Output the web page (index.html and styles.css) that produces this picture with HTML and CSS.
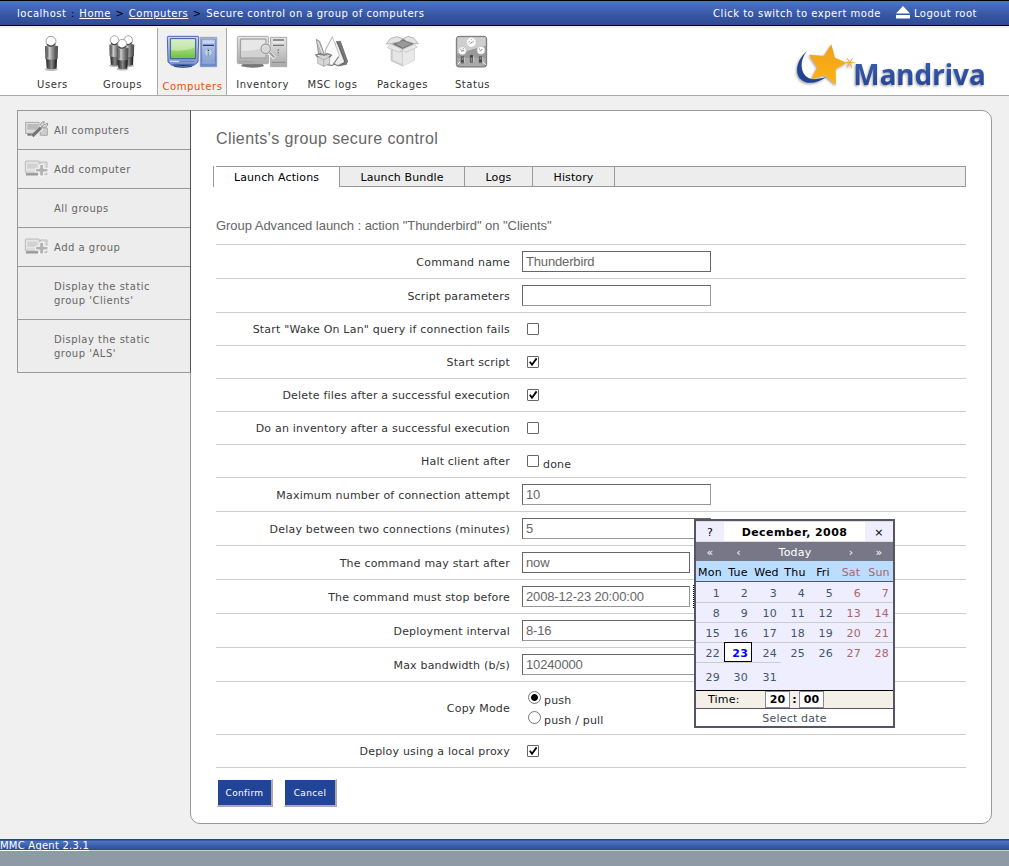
FILE: index.html
```html
<!DOCTYPE html>
<html lang="en">
<head>
<meta charset="utf-8">
<title>Mandriva Management Console</title>
<link rel="stylesheet" href="styles.css">
</head>
<body>
<svg class="defs" width="0" height="0" aria-hidden="true">
<defs>
<linearGradient id="metal"><stop offset="0" stop-color="#444"/><stop offset=".35" stop-color="#ccc"/><stop offset=".6" stop-color="#888"/><stop offset="1" stop-color="#444"/></linearGradient>
<linearGradient id="legs"><stop offset="0" stop-color="#222"/><stop offset=".5" stop-color="#888"/><stop offset="1" stop-color="#111"/></linearGradient>
<linearGradient id="green" x2="0" y2="1"><stop offset="0" stop-color="#cbeab4"/><stop offset=".55" stop-color="#9ad573"/><stop offset="1" stop-color="#6fc13e"/></linearGradient>
<linearGradient id="blue" x2="0" y2="1"><stop offset="0" stop-color="#c5d2f0"/><stop offset="1" stop-color="#7f97d0"/></linearGradient>
<linearGradient id="grey" x2="0" y2="1"><stop offset="0" stop-color="#e6e6e6"/><stop offset="1" stop-color="#aaa"/></linearGradient>
<linearGradient id="brand" x2="0" y2="1"><stop offset="0" stop-color="#3c63b4"/><stop offset="1" stop-color="#203f8f"/></linearGradient>
<linearGradient id="gold" x2="0" y2="1"><stop offset="0" stop-color="#f0a01c"/><stop offset="1" stop-color="#fcb415"/></linearGradient>
<filter id="soft" x="-20%" y="-20%" width="140%" height="140%"><feDropShadow dx="-3" dy="4" stdDeviation="3" flood-color="#555" flood-opacity=".55"/></filter>
<g id="person">
<ellipse cx="154" cy="208" rx="20" ry="5" fill="#bbb"/>
<path d="M138 174h33l-1 31q-15 6-30 0z" fill="url(#legs)"/>
<path d="M135 139q19-8 39 0l-1 38q-19 5-37 0z" fill="url(#metal)"/>
<path d="M143 142v31M166 142v31" stroke="#555" stroke-width="2"/>
<circle cx="153" cy="124" r="15" fill="#fff" stroke="#888" stroke-width="2.5"/>
<path d="M141 133q12 12 25-2" fill="none" stroke="#444" stroke-width="4"/>
</g>
<g id="addpc">
<rect x="76" y="184" width="42" height="36" rx="2" fill="#ddd" stroke="#bbb" stroke-width="3"/><path d="M80 190h34v19H80z" fill="#d2d2d2" stroke="#f5f5f5" stroke-width="2"/><path d="M78 224h36" stroke="#999" stroke-width="7"/>
<path d="M121 187h20v37h-20z" fill="#ddd" stroke="#bbb" stroke-width="3"/>
<path d="M119 194h12v12h13v11h-13v12h-12v-12h-13v-11h13z" fill="#b3b3b3" stroke="#fafafa" stroke-width="3"/>
</g>
</defs>
</svg>

<header class="topbar">
<div class="crumbs">localhost <i>:</i> <a>Home</a> <i>&gt;</i> <a>Computers</a> <i>&gt;</i> Secure control on a group of computers</div>
<div class="session"><span class="expert">Click to switch to expert mode</span>
<svg width="14" height="13" viewBox="0 0 14 13"><path d="M7 0l7 7.5H0zM0 9h14v3.5H0z" fill="#fff"/></svg>
<span class="logout">Logout root</span></div>
</header>

<nav class="nav">
<a class="item"><svg viewBox="51 102 210 114"><use href="#person"/></svg><span>Users</span></a>
<a class="item"><svg viewBox="261 102 210 114"><g transform="translate(212 8) scale(.86 .91)"><use href="#person"/></g><g transform="translate(253 8) scale(.86 .91)"><use href="#person"/></g><g transform="translate(229 20) scale(.9)"><use href="#person"/></g></svg><span>Groups</span></a>
<a class="item active"><svg viewBox="474 102 204 114">
<path d="M518 196l5-8h50l7 8-6 5q-25 4-50 0z" fill="#1f3a6e"/><path d="M514 196q34 8 69 0" fill="none" stroke="#4d76b8" stroke-width="3"/>
<path d="M504 109h90q2 0 2 3l-2 74-8 7h-74l-8-7-2-74q0-3 2-3z" fill="url(#blue)" stroke="#5069ad" stroke-width="3"/>
<path d="M511 116h76v60h-76z" fill="url(#green)" stroke="#3c5aa2" stroke-width="3"/><path d="M514 118h70v24q-26 13-70 9z" fill="#e0f2d2" opacity=".55"/>
<path d="M510 184h27" stroke="#e6ecfa" stroke-width="3"/><path d="M540 184h43" stroke="#6480c0" stroke-width="3"/>
<path d="M601 112h49v88h-49z" fill="url(#blue)" stroke="#6a80bc" stroke-width="2"/><path d="M605 117h41v78h-41z" fill="none" stroke="#4b65a8" stroke-width="2"/><path d="M609 126h33" stroke="#d5dff5" stroke-width="4"/><path d="M609 136h33" stroke="#243d7a" stroke-width="4"/><circle cx="625" cy="157" r="12" fill="#c0cdec" stroke="#8298cf" stroke-width="2"/><path d="M623 151h4" stroke="#222" stroke-width="4"/><path d="M625 156v12" stroke="#54c54a" stroke-width="4"/><path d="M604 188h43" stroke="#90a2cf" stroke-width="4"/>
</svg><span>Computers</span></a>
<a class="item"><svg viewBox="-9 102 210 114">
<path d="M38 191h60l4 8q-34 8-69 0z" fill="#777"/><rect x="22" y="109" width="94" height="82" rx="4" fill="url(#grey)" stroke="#aaa" stroke-width="3"/><path d="M31 117h77v57H31z" fill="#d2d2d2" stroke="#999" stroke-width="3"/><path d="M34 120h71v20q-30 15-71 12z" fill="#e7e7e7"/><path d="M28 185h43" stroke="#999" stroke-width="3" stroke-dasharray="4 2"/>
<path d="M122 112h48v88h-48z" fill="url(#grey)" stroke="#aaa" stroke-width="3"/><path d="M129 120h33M129 136h33" stroke="#777" stroke-width="4"/><path d="M129 127h33" stroke="#eee" stroke-width="4"/><path d="M145 148v18" stroke="#777" stroke-width="4" stroke-dasharray="4 4"/><path d="M126 187h41" stroke="#888" stroke-width="3"/>
<path d="M117 158l17 16" stroke="#eee" stroke-width="12"/><path d="M119 158l14 14" stroke="#999" stroke-width="6"/><circle cx="107" cy="146" r="14" fill="#d8d8d8" stroke="#f0f0f0" stroke-width="7"/><circle cx="107" cy="146" r="14" fill="none" stroke="#999" stroke-width="4"/>
</svg><span>Inventory</span></a>
<a class="item"><svg viewBox="201 102 210 114">
<path d="M320 124l12-2 22 62-4 10-23 5-15-9z" fill="#777"/><path d="M320 124l25 62-19 12-25-9z" fill="#bbb" stroke="#444" stroke-width="2"/><path d="M318 124l24 62-20 8-8-5z" fill="#eee"/>
<path d="M307 110l21 56-22 30-18-5-2-40z" fill="#fafafa" stroke="#aaa" stroke-width="2"/><path d="M307 112l-21 38 5 37" fill="none" stroke="#bbb" stroke-width="3"/><path d="M291 194l17 3 18-27" fill="none" stroke="#777" stroke-width="3"/>
<path d="M259 118l10 6 15 41-18-2z" fill="#bbb" stroke="#777" stroke-width="2"/><path d="M263 124l16 40" stroke="#eee" stroke-width="3"/>
<path d="M263 171l19-9 17 8v21l-18 8-18-9z" fill="#d8d8d8" stroke="#999" stroke-width="2"/><path d="M263 171l18 8 18-8M281 179v20" fill="none" stroke="#999" stroke-width="2"/><path d="M263 171l-5-6 15-4 9 5 10-5 12 5-6 6" fill="none" stroke="#777" stroke-width="4"/>
</svg><span>MSC logs</span></a>
<a class="item"><svg viewBox="411 102 210 114">
<path d="M483 137l35-19 35 16v47l-35 17-35-16z" fill="#ddd" stroke="#bbb" stroke-width="2"/><path d="M518 151l35-15v45l-35 17z" fill="#e9e9e9"/><path d="M483 138l35 15v45l-35-16z" fill="#c9c9c9"/><path d="M488 146l28 12v34l-28-12z" fill="#e5e5e5"/><path d="M486 132l33-15 33 14-34 17z" fill="#777"/><path d="M498 132l21-10 24 10-25 11z" fill="#999"/>
<path d="M484 131l-15 1 12-16 19-6 18 6-9 9zM554 131l11 0-14-17-17-5-14 7 10 8z" fill="#e4e4e4" stroke="#999" stroke-width="2"/><path d="M483 133l34 15-9 9-36-14zM553 133l-35 15 9 9 35-16z" fill="#e8e8e8" stroke="#bbb" stroke-width="2"/>
</svg><span>Packages</span></a>
<a class="item"><svg viewBox="621 102 210 114">
<rect x="679" y="109" width="91" height="92" rx="8" fill="#999" stroke="#777" stroke-width="3"/><path d="M682 112h85v25q-30 8-85 24z" fill="#cfcfcf"/><path d="M682 174h85v15l-8 9h-69l-8-7z" fill="#aaa"/><g fill="#fff" stroke="#bbb" stroke-width="2"><circle cx="724" cy="127" r="15"/><circle cx="697" cy="152" r="12"/><circle cx="753" cy="151" r="12"/></g><path d="M716 125h3M723 119h2M730 124h2M721 130l7-4M691 148h3M698 146h3M693 153l10-1M747 147h3M757 147l-7 7" stroke="#777" stroke-width="3"/>
<g fill="#888" stroke="#444" stroke-width="2"><path d="M694 170h7v19h-7zM721 166h7v21h-7zM748 170h7v18h-7z"/></g><path d="M694 183h7M721 169h7M748 182h7" stroke="#333" stroke-width="5"/><path d="M703 171v17M731 167v20M758 171v17" stroke="#ddd" stroke-width="2"/><path d="M683 193l7-7M767 194l-8-7" stroke="#fff" stroke-width="3"/>
</svg><span>Status</span></a>
<svg class="logo" viewBox="279 120 582 150" width="194" height="50">
<g filter="url(#soft)"><path d="M321 153C285 184 283 227 308 242C328 254 354 249 379 231C348 240 328 241 315 226C301 209 300 178 321 153z" fill="#234392"/>
<path d="M394 133L405 173L440 188L407 207L408 255L374 226L333 238L352 202L327 164L372 167z" fill="url(#gold)"/>
<path d="M438 188h25M442 175l14 28M457 175l-16 27" stroke="#f3a51e" stroke-width="3"/>
<text x="460" y="256" class="brand" textLength="397" lengthAdjust="spacingAndGlyphs" fill="url(#brand)">Mandriva</text></g>
</svg>
</nav>

<main class="main">
<aside class="side">
<a><svg viewBox="72 160 75 60"><g transform="translate(0 -20)"><rect x="77" y="187" width="40" height="33" fill="#ddd" stroke="#aaa" stroke-width="3"/><path d="M82 192h32v17H82z" fill="#bbb"/><path d="M82 224h28" stroke="#777" stroke-width="6"/><path d="M121 204h21v22h-21z" fill="#ccc" stroke="#aaa" stroke-width="3"/><path d="M98 229l27-26" stroke="#eee" stroke-width="14"/><path d="M97 228l26-25" stroke="#777" stroke-width="10"/><path d="M122 206l10-13M133 185q-14 1-10 12 5 9 15 4 6-4 5-12l-8 5-4-3z" fill="#ddd" stroke="#999" stroke-width="3"/></g></svg><span>All computers</span></a>
<a><svg viewBox="72 178 75 60"><use href="#addpc"/></svg><span>Add computer</span></a>
<a><span>All groups</span></a>
<a><svg viewBox="72 178 75 60"><use href="#addpc"/></svg><span>Add a group</span></a>
<a class="tall"><span>Display the static<br>group 'Clients'</span></a>
<a class="tall"><span>Display the static<br>group 'ALS'</span></a>
</aside>
<section class="panel">
<h1>Clients's group secure control</h1>
<div class="tabs"><a class="t1">Launch Actions</a><a class="t2">Launch Bundle</a><a class="t3">Logs</a><a class="t4">History</a></div>
<h2>Group Advanced launch : action "Thunderbird" on "Clients"</h2>
<div class="form">
<div class="row"><label>Command name</label><div class="field dark">Thunderbird</div></div>
<div class="row"><label>Script parameters</label><div class="field"></div></div>
<div class="row chk"><label>Start "Wake On Lan" query if connection fails</label><span class="box"></span></div>
<div class="row chk"><label>Start script</label><span class="box"><svg viewBox="0 0 10 10"><path d="M1.8 4.7L4 7.8 8.6 1.4"/></svg></span></div>
<div class="row chk"><label>Delete files after a successful execution</label><span class="box"><svg viewBox="0 0 10 10"><path d="M1.8 4.7L4 7.8 8.6 1.4"/></svg></span></div>
<div class="row chk"><label>Do an inventory after a successful execution</label><span class="box"></span></div>
<div class="row chk"><label>Halt client after</label><span class="box"></span><span class="opt">done</span></div>
<div class="row"><label>Maximum number of connection attempt</label><div class="field">10</div></div>
<div class="row"><label>Delay between two connections (minutes)</label><div class="field">5</div></div>
<div class="row"><label>The command may start after</label><div class="field short dark">now</div></div>
<div class="row"><label>The command must stop before</label><div class="field short">2008-12-23 20:00:00</div><span class="picker"></span></div>
<div class="row"><label>Deployment interval</label><div class="field">8-16</div></div>
<div class="row"><label>Max bandwidth (b/s)</label><div class="field">10240000</div></div>
<div class="row modes"><label>Copy Mode</label><div class="radios"><div><span class="radio on"></span><span>push</span></div><div><span class="radio"></span><span>push / pull</span></div></div></div>
<div class="row chk"><label>Deploy using a local proxy</label><span class="box"><svg viewBox="0 0 10 10"><path d="M1.8 4.7L4 7.8 8.6 1.4"/></svg></span></div>
</div>
<div class="buttons"><button class="confirm">Confirm</button><button class="cancel">Cancel</button></div>
</section>
</main>

<div class="calendar">
<div class="cal-title"><span class="q">?</span><b>December, 2008</b><span class="q">×</span></div>
<div class="cal-nav"><span>«</span><span>‹</span><span class="today">Today</span><span>›</span><span>»</span></div>
<div class="cal-days"><span>Mon</span><span>Tue</span><span>Wed</span><span>Thu</span><span>Fri</span><span class="we">Sat</span><span class="we">Sun</span></div>
<div class="week"><span>1</span><span>2</span><span>3</span><span>4</span><span>5</span><span class="we">6</span><span class="we">7</span></div>
<div class="week"><span>8</span><span>9</span><span>10</span><span>11</span><span>12</span><span class="we">13</span><span class="we">14</span></div>
<div class="week"><span>15</span><span>16</span><span>17</span><span>18</span><span>19</span><span class="we">20</span><span class="we">21</span></div>
<div class="week part"><span>22</span><span class="sel">23</span><span>24</span><span>25</span><span>26</span><span class="we">27</span><span class="we">28</span></div>
<div class="week last"><span>29</span><span>30</span><span>31</span></div>
<div class="time"><span class="tl">Time:</span><b class="tb">20</b><b class="colon">:</b><b class="tb">00</b></div>
<div class="status">Select date</div>
</div>

<footer class="footer"><span>MMC Agent 2.3.1</span></footer>
</body>
</html>
```
FILE: styles.css
```css
* { box-sizing: border-box; }
body { margin: 0; height: 866px; display: flex; flex-direction: column; overflow: hidden; background: #f0f0f0; color: #333; font: 11px/14px "DejaVu Sans", sans-serif; letter-spacing: .2px; position: relative; }
.defs { position: absolute; }

.topbar { height: 26px; flex: none; display: flex; justify-content: space-between; align-items: center; padding: 1px 32px 0 17px; border-top: 1px solid #000; border-bottom: 1px solid #000; background: linear-gradient(#4a76c6, #3656a4 60%, #2f4a93); color: #fff; font-size: 10px; letter-spacing: .51px; white-space: nowrap; }
.crumbs a { text-decoration: underline; }
.crumbs i { font-style: normal; color: #000; margin: 0 .8px; }
.session { display: flex; align-items: center; }
.session svg { margin: -2px 4px 0 15px; }

.nav { height: 70px; flex: none; display: flex; padding-left: 17px; background: #fff; border-top: 2px solid #f0f0f0; border-bottom: 1px solid #aaa; font-size: 10px; letter-spacing: .55px; }
.item { width: 70px; padding-top: 6px; display: flex; flex-direction: column; align-items: center; }
.item svg { width: 100%; height: 38px; }
.item span { margin: 6px 0 0 1px; white-space: nowrap; }
.item.active { background: #f0f0f0; border: solid #aaa; border-width: 0 1px; color: #e84e0f; }
.item.active span { margin-top: 8px; }
.logo { margin: 12px 0 0 286px; overflow: visible; }
.brand { font: bold 84px "Noto Sans", sans-serif; letter-spacing: 0; }

.main { display: flex; align-items: flex-start; height: 743px; flex: none; padding: 14px 0 0 17px; }
.side { width: 174px; margin-right: -1px; flex: none; border: 1px solid #999; border-right-color: #555; background: #ededed; color: #666; font-size: 10px; letter-spacing: .5px; z-index: 1; }
.side a { height: 39px; display: flex; align-items: center; padding-left: 36px; border-bottom: 1px solid #999; padding-top: 1px; }
.side a.tall { height: 53px; }
.side a.tall:last-child { border-bottom: 0; height: 52px; }
.side svg { width: 25px; height: 20px; margin: -1px 5px 0 -30px; }
.panel { width: 802px; height: 714px; border: 1px solid #999; border-radius: 0 10px 10px 10px; background: #fff; padding: 19px 25px 0; }
h1 { margin: 0; font: 16px/18px "Liberation Sans", sans-serif; letter-spacing: .4px; color: #666; }
.tabs { display: flex; height: 21px; margin: 18px 0 0 -3px; background: linear-gradient(#999, #999) 3px 0 / 100% 1px no-repeat, linear-gradient(#999, #999) 127px 20px / 100% 1px no-repeat, #ededed; border-right: 1px solid #999; color: #000; letter-spacing: .12px; }
.tabs a { border-right: 1px solid #999; display: flex; align-items: center; justify-content: center; padding-top: 2px; }
.t1 { width: 127px; background: linear-gradient(#999, #999) 2px 0 / 100% 1px no-repeat, #fff; border-left: 1px solid #999; }
.t2 { width: 125px; } .t3 { width: 68px; } .t4 { width: 82px; }
h2 { margin: 31px 0 10px; font: 13px/16px "Liberation Sans", sans-serif; letter-spacing: -.04px; color: #666; }
.form { border-top: 1px solid #ccc; }
.row { height: 34px; display: flex; align-items: center; border-bottom: 1px solid #ccc; }
.row label { width: 294px; text-align: right; margin-right: 12px; padding-top: 2px; white-space: nowrap; }
.row.chk { height: 33px; }
.row.chk label { padding-top: 1px; }
.row.modes { height: 53px; }
.field { width: 189px; height: 21px; border: 1px solid #999; border-top-color: #666; border-left-color: #666; background: #fff; padding: 0 3px; font: 13px/20px "Liberation Sans", sans-serif; letter-spacing: -.15px; color: #666; }
.field.short { width: 168px; }
.field.dark { border-color: #666; }
.picker { width: 24px; height: 23px; margin-left: 3px; border: 1px dotted #000; }
.box { width: 12px; height: 12px; margin-left: 5px; border: 1px solid #666; border-radius: 1px; display: flex; flex: none; }
.box svg { width: 10px; height: 10px; fill: none; stroke: #000; stroke-width: 1.8; }
.opt { margin: 7px 0 0 4px; }
.radios { padding: 6px 0 0 6px; }
.radios div { height: 20px; display: flex; align-items: flex-start; }
.radios span + span { margin: 3px 0 0 3px; }
.radio { width: 13px; height: 13px; border: 1px solid #777; border-radius: 50%; }
.radio.on { background: radial-gradient(circle, #000 0 3px, #fff 3.8px); }
.buttons { display: flex; gap: 11px; padding: 11px 0 0 1px; }
.buttons button { height: 28px; padding: 0; border: 1px solid #fff; border-width: 1px 2px 2px 1px; border-right-color: #aaa; border-bottom-color: #aaa; background: #214499; color: #fff; font: 9px "DejaVu Sans", sans-serif; letter-spacing: .35px; }
.confirm { width: 56px; } .cancel { width: 53px; }

.calendar { position: absolute; left: 694px; top: 519px; width: 201px; height: 209px; border: 2px solid #556; background: #eef; color: #456; }
.calendar .we { color: #a66; }
.cal-title { display: flex; height: 21px; border-top: 1px solid #ddd; color: #000; line-height: 21px; text-align: center; border-bottom: 1px solid #ddd; }
.cal-title b { flex: 1; background: #fff; letter-spacing: .42px; }
.q { width: 28px; }
.cal-nav { display: grid; grid-template-columns: 28px 29px 1fr 28px 28px; height: 19px; background: #778; color: #fff; text-align: center; line-height: 21px; }
.cal-days, .week { display: grid; grid-template-columns: 28px 28px 29px repeat(4, 28px); }
.cal-days { height: 21px; background: #bdf; color: #000; border-bottom: 1px solid #556; text-align: center; line-height: 23px; }
.week { height: 20px; text-align: right; line-height: 22px; border-bottom: 1px solid #ccc; }
.cal-days + .week { height: 21px; line-height: 24px; }
.week span { padding-right: 4px; }
.week.part { border-bottom: 0; background: linear-gradient(#ccc, #ccc) 0 19px / 85px 1px no-repeat; }
.week .sel { margin-top: -1px; height: 20px; line-height: 21px; padding-right: 3px; background: #fff; border: 1px solid #000; color: #00f; font-weight: bold; }
.week.last { height: 28px; line-height: 29px; border-bottom: 1px solid #000; }
.time { display: flex; height: 18px; background: #f4f0e8; color: #000; border-bottom: 1px solid #556; line-height: 18px; }
.tl { width: 69px; padding-left: 12px; }
.tb { width: 25px; height: 17px; border: 1px solid #889; background: #fff; text-align: center; line-height: 16px; }
.colon { width: 9px; text-align: center; line-height: 17px; }
.status { height: 17px; text-align: center; line-height: 19px; background: #fff; }

.footer { flex: none; height: 27px; background: linear-gradient(#2a4480 0 1px, #4a76c6 2px, #2f4a93 11px, #ccc 11px 12px, #8e9ba6 12px); color: #fff; font-size: 10px; line-height: 14px; letter-spacing: .23px; text-decoration: underline; }
```
